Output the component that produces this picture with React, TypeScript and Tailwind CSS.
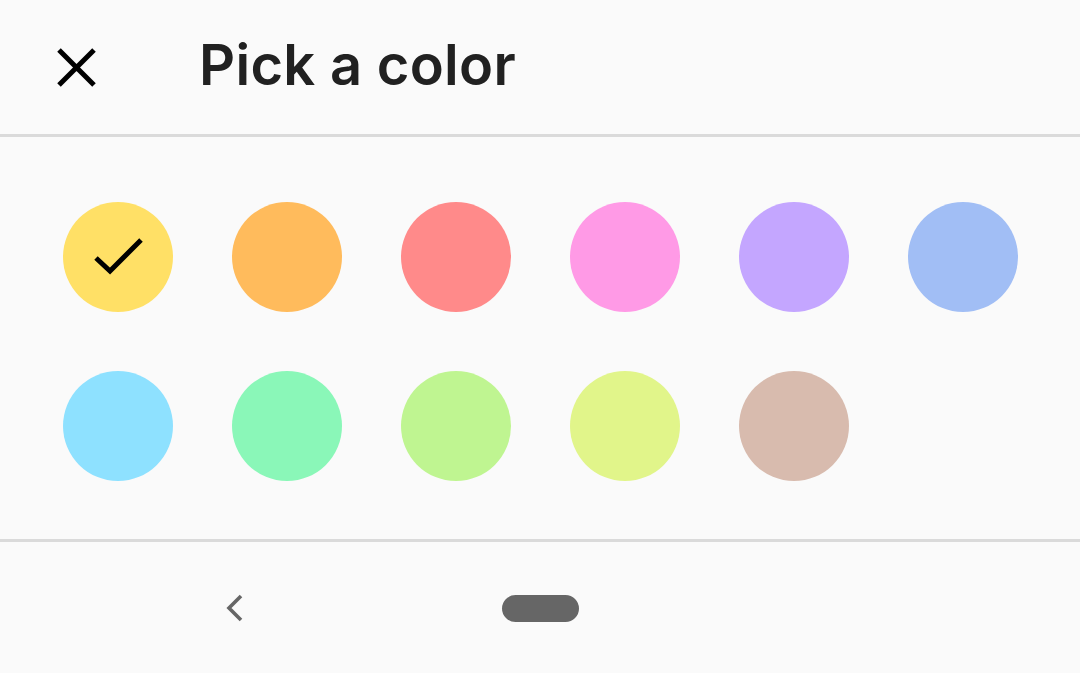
const colors = [
  "#ffe066",
  "#ffbb5c",
  "#ff8a8a",
  "#ff9ae6",
  "#c4a6ff",
  "#a1bef5",
  "#8ee1ff",
  "#8af7b8",
  "#bff591",
  "#e1f58a",
  "#d8bbae",
];

export default function App() {
  const selected = 0;
  return (
    <div className="flex h-[673px] w-[1080px] flex-col overflow-hidden bg-[#fafafa] font-['Inter',sans-serif]">
      {/* Top bar */}
      <header className="flex h-[134px] shrink-0 items-center">
        <button className="ml-[57px] flex h-[39px] w-[39px] items-center justify-center text-black">
          <svg width="39" height="39" viewBox="0 0 39 39" fill="none">
            <path d="M2 2L37 37M37 2L2 37" stroke="currentColor" strokeWidth="5" />
          </svg>
        </button>
        <h1 className="ml-[103px] pb-[4px] text-[56px] font-semibold tracking-[0.3px] text-[#212121]">
          Pick a color
        </h1>
      </header>
      <div className="h-[3px] shrink-0 bg-[#dadada]" />

      {/* Swatches */}
      <div className="grid grid-cols-[repeat(6,110px)] gap-[59px] px-[63px] pt-[65px] pb-[58px]">
        {colors.map((c, i) => (
          <div
            key={c}
            className="h-[110px] w-[110px] rounded-full"
            style={{ backgroundColor: c }}
          >
            {i === selected && (
              <svg width="110" height="110" viewBox="0 0 110 110" fill="none">
                <path d="M33 56L47 69L78 38" stroke="#000" strokeWidth="5" />
              </svg>
            )}
          </div>
        ))}
      </div>
      <div className="h-[3px] shrink-0 bg-[#dadada]" />

      {/* Nav bar */}
      <nav className="relative flex-1">
        <svg
          className="absolute left-[224px] top-[52px]"
          width="20"
          height="28"
          viewBox="0 0 20 28"
          fill="none"
        >
          <path d="M17 2L5 14L17 26" stroke="#666" strokeWidth="3.6" />
        </svg>
        <div className="absolute left-[502px] top-[53px] h-[27px] w-[77px] rounded-full bg-[#666]" />
      </nav>
    </div>
  );
}
